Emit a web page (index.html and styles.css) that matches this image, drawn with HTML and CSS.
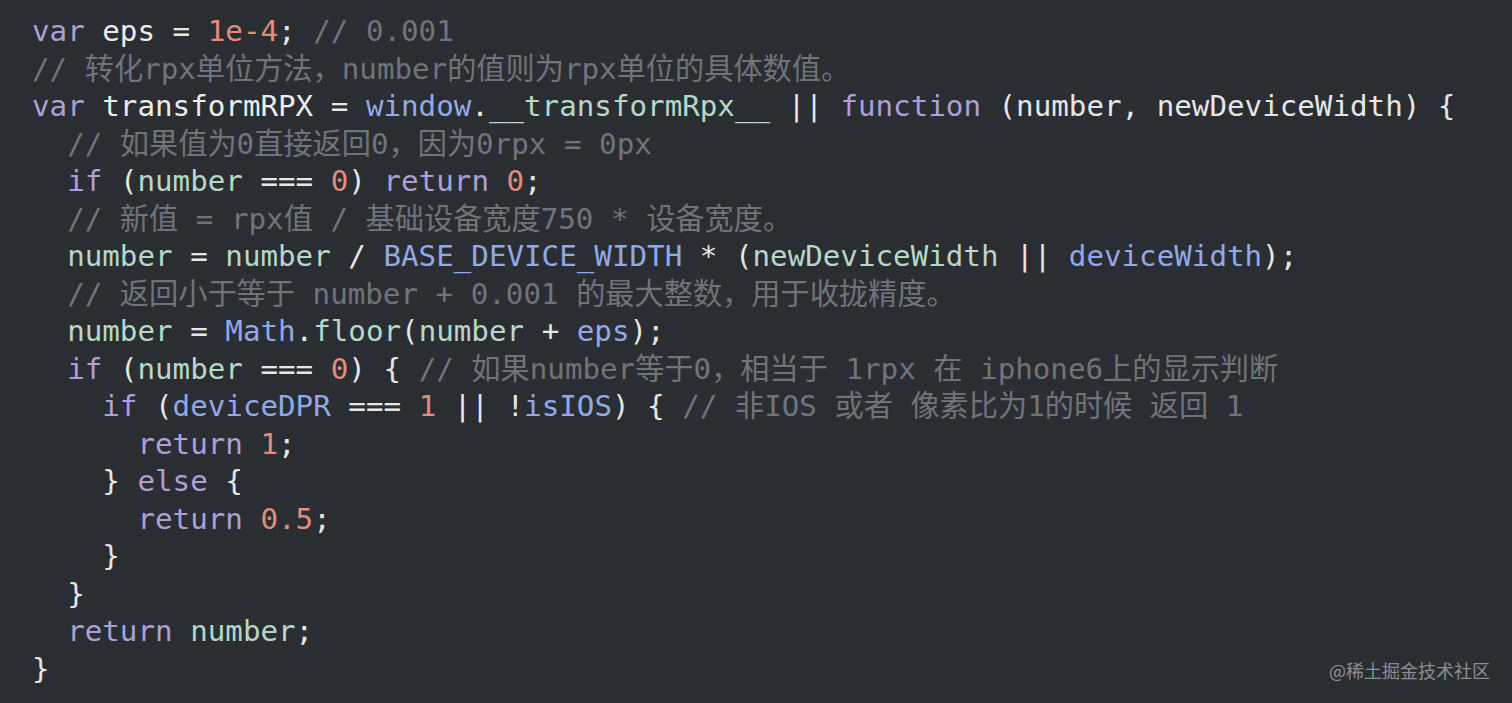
FILE: index.html
```html
<!DOCTYPE html>
<html lang="zh">
<head>
<meta charset="utf-8">
<link rel="stylesheet" href="styles.css">
</head>
<body>
<div class="page">
<pre class="code"><span class="k">var</span> <span class="w">eps</span> = <span class="n">1e-4</span>; <span class="c">// 0.001</span>
<span class="c">// 转化rpx单位方法，number的值则为rpx单位的具体数值。</span>
<span class="k">var</span> <span class="w">transformRPX</span> = <span class="b">window</span>.<span class="v">__transformRpx__</span> || <span class="k">function</span> (number, newDeviceWidth) {
  <span class="c">// 如果值为0直接返回0，因为0rpx = 0px</span>
  <span class="k">if</span> (<span class="v">number</span> === <span class="n">0</span>) <span class="k">return</span> <span class="n">0</span>;
  <span class="c">// 新值 = rpx值 / 基础设备宽度750 * 设备宽度。</span>
  <span class="v">number</span> = <span class="v">number</span> / <span class="b">BASE_DEVICE_WIDTH</span> * (<span class="v">newDeviceWidth</span> || <span class="b">deviceWidth</span>);
  <span class="c">// 返回小于等于 number + 0.001 的最大整数，用于收拢精度。</span>
  <span class="v">number</span> = <span class="b">Math</span>.<span class="v">floor</span>(<span class="v">number</span> + <span class="b">eps</span>);
  <span class="k">if</span> (<span class="v">number</span> === <span class="n">0</span>) { <span class="c">// 如果number等于0，相当于 1rpx 在 iphone6上的显示判断</span>
    <span class="k">if</span> (<span class="b">deviceDPR</span> === <span class="n">1</span> || !<span class="b">isIOS</span>) { <span class="c">// 非IOS 或者 像素比为1的时候 返回 1</span>
      <span class="k">return</span> <span class="n">1</span>;
    } <span class="k">else</span> {
      <span class="k">return</span> <span class="n">0.5</span>;
    }
  }
  <span class="k">return</span> <span class="v">number</span>;
}</pre>
<div class="mark">@稀土掘金技术社区</div>
</div>
</body>
</html>
```

FILE: styles.css
```css
html, body {
  margin: 0;
  padding: 0;
  background: #2a2e33;
}
.page {
  position: relative;
  width: 1512px;
  height: 703px;
  overflow: hidden;
  background: #2a2e33;
}
.code {
  margin: 0;
  padding: 13px 0 0 32px;
  font-family: "DejaVu Sans Mono", "Noto Sans CJK SC", monospace;
  font-size: 29.2px;
  line-height: 37.5px;
  color: #e6e6e6;
  white-space: pre;
}
.k { color: #ae9fd6; }
.w { color: #ececec; }
.n { color: #e38c7a; }
.c { color: #6f747b; }
.b { color: #93a8e6; }
.v { color: #b6d7c9; }
.mark {
  position: absolute;
  right: 22px;
  bottom: 22px;
  font-family: "Noto Sans CJK SC", "Noto Sans", sans-serif;
  font-size: 18px;
  line-height: 22px;
  color: #8b8e93;
}
```
